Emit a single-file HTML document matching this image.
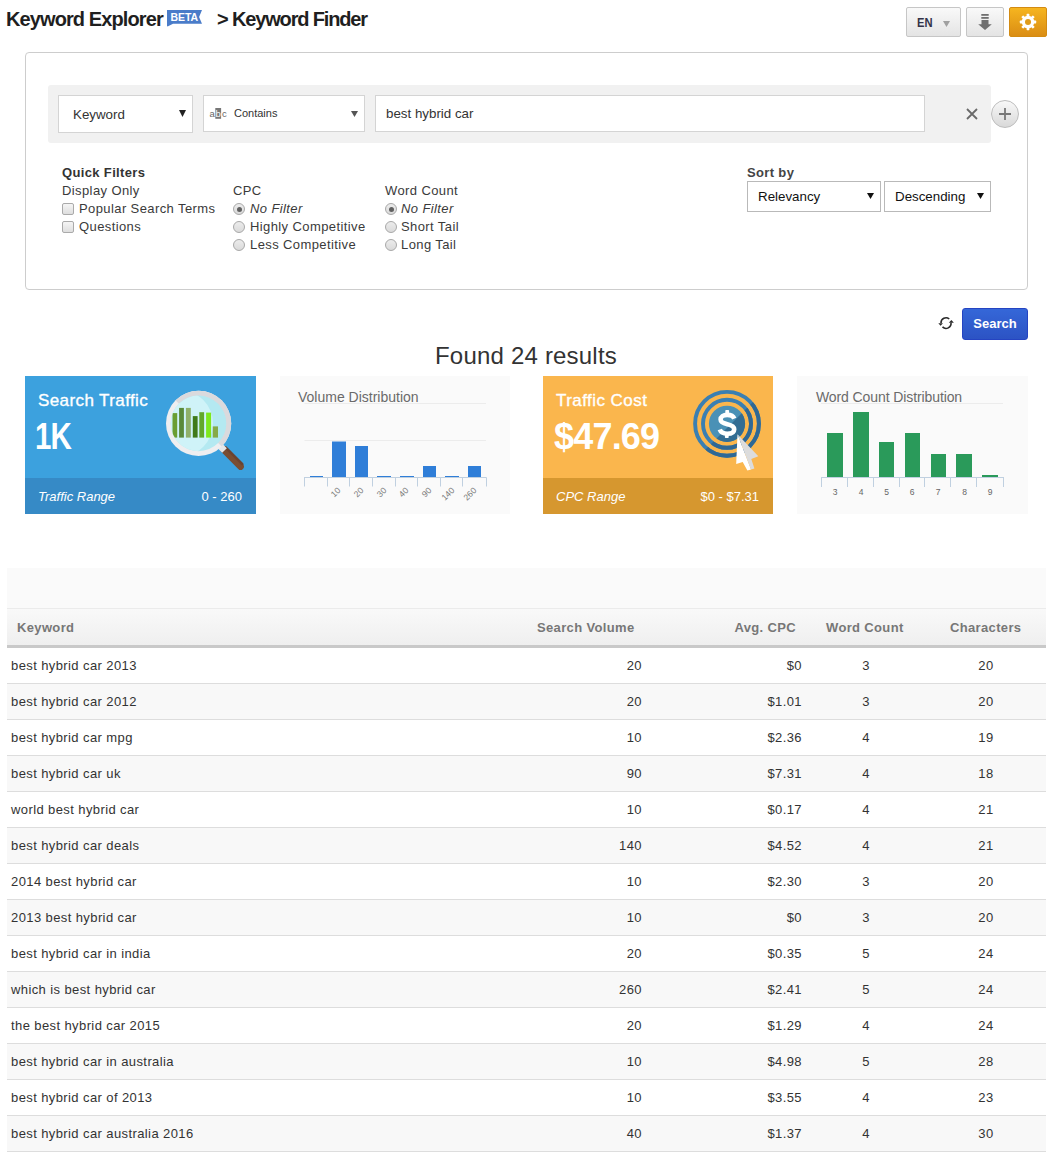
<!DOCTYPE html>
<html><head><meta charset="utf-8">
<style>
*{box-sizing:border-box;margin:0;padding:0}
html,body{width:1048px;height:1153px;overflow:hidden;background:#fff;font-family:"Liberation Sans",sans-serif;color:#333}
body{position:relative}
.a{position:absolute;white-space:nowrap;line-height:1}
svg.a{display:block}
.title{font-weight:bold;font-size:20px;color:#1f1f1f}
.btn{position:absolute;border:1px solid #c6c6c6;border-radius:2px;background:linear-gradient(#f9f9f9,#e4e4e4)}
.sel{position:absolute;background:#fff;border:1px solid #d4d4d4}
.f13{font-size:13px;color:#3a3a3a;letter-spacing:0.4px}
.chk{position:absolute;width:12px;height:12px;border:1px solid #aaa;border-radius:2px;background:linear-gradient(#f5f5f5,#dedede)}
.rad{position:absolute;width:12px;height:12px;border:1px solid #a8a8a8;border-radius:50%;background:linear-gradient(#ececec,#dadada)}
.rad.on::after{content:"";position:absolute;left:2.5px;top:2.5px;width:5px;height:5px;border-radius:50%;background:#606060}
.td{position:absolute;font-size:13px;color:#333;letter-spacing:0.4px}
.th{position:absolute;font-size:13px;font-weight:bold;color:#777;letter-spacing:0.35px}
</style></head><body>
<div class="a title" style="left:6px;top:9px;letter-spacing:-0.9px">Keyword Explorer</div>
<svg class="a" style="left:167px;top:10px" width="36" height="17" viewBox="0 0 36 17"><path d="M0 0H35L32.1 6.9L35 13.7H6L0.6 16.6L0 16Z" fill="#4a7cc9"/><text x="3.5" y="10.9" font-family="Liberation Sans" font-weight="bold" font-size="10.5" fill="#fff" letter-spacing="-0.1">BETA</text></svg>
<div class="a title" style="left:217px;top:9px;letter-spacing:-1.15px">&gt; Keyword Finder</div>
<div class="btn" style="left:906px;top:7px;width:55px;height:30px"></div>
<div class="a" style="left:917px;top:16px;font-size:13px;font-weight:bold;color:#33334a;transform:scaleX(0.86);transform-origin:0 0">EN</div>
<svg class="a" style="left:943px;top:21px" width="7" height="6"><path d="M0 0H7L3.5 6Z" fill="#a0a0a0"/></svg>
<div class="btn" style="left:966px;top:7px;width:38px;height:30px"></div>
<svg class="a" style="left:977px;top:12px" width="16" height="20" viewBox="0 0 16 20"><rect x="4.3" y="2" width="7.4" height="1.8" fill="#707070"/><rect x="4.3" y="5" width="7.4" height="1.8" fill="#707070"/><path d="M4.5 8H11.5V12.2H14.8L8 18L1.2 12.2H4.5Z" fill="#707070"/></svg>
<div class="btn" style="left:1009px;top:7px;width:38px;height:30px;border-color:#d38b12;background:linear-gradient(#f6b51f,#da8d14)"></div>
<svg class="a" style="left:1019px;top:13px" width="18" height="18" viewBox="0 0 18 18"><g fill="#fff"><circle cx="9" cy="9" r="6.3"/><g id="th"><rect x="7.6" y="0.8" width="2.8" height="16.4" rx="0.6"/></g><rect x="7.6" y="0.8" width="2.8" height="16.4" rx="0.6" transform="rotate(45 9 9)"/><rect x="7.6" y="0.8" width="2.8" height="16.4" rx="0.6" transform="rotate(90 9 9)"/><rect x="7.6" y="0.8" width="2.8" height="16.4" rx="0.6" transform="rotate(135 9 9)"/></g><circle cx="9" cy="9" r="3" fill="#e09c1a"/></svg>
<div class="a" style="left:25px;top:52px;width:1003px;height:238px;border:1px solid #cdcdcd;border-radius:4px"></div>
<div class="a" style="left:48px;top:85px;width:943px;height:58px;background:#f1f1f1;border-radius:3px"></div>
<div class="sel" style="left:58px;top:95px;width:135px;height:38px"></div>
<div class="a" style="left:73px;top:108px;font-size:13.33px;color:#333">Keyword</div>
<svg class="a" style="left:179px;top:110px" width="7" height="7"><path d="M0 0H7L3.5 7Z" fill="#222"/></svg>
<div class="sel" style="left:203px;top:95px;width:162px;height:37px"></div>
<svg class="a" style="left:209px;top:107px" width="18" height="12" viewBox="0 0 18 12"><text x="0.5" y="10" font-family="Liberation Sans" font-size="9.5" fill="#666">a</text><rect x="6.3" y="1" width="5.8" height="10.8" fill="#777"/><text x="6.6" y="10" font-family="Liberation Sans" font-size="9.5" fill="#fff">b</text><text x="13" y="10" font-family="Liberation Sans" font-size="9.5" fill="#666">c</text></svg>
<div class="a" style="left:234px;top:108px;font-size:11px;color:#333">Contains</div>
<svg class="a" style="left:351px;top:111px" width="7" height="6"><path d="M0 0H7L3.5 6Z" fill="#555"/></svg>
<div class="sel" style="left:375px;top:95px;width:550px;height:37px"></div>
<div class="a" style="left:386px;top:107px;font-size:13.33px;color:#333">best hybrid car</div>
<svg class="a" style="left:966px;top:108px" width="12" height="12"><path d="M1 1L11 11M11 1L1 11" stroke="#6a6a6a" stroke-width="1.8"/></svg>
<div class="a" style="left:991px;top:100px;width:28px;height:28px;border:1px solid #bdbdbd;border-radius:50%;background:linear-gradient(#f8f8f8,#d9d9d9)"></div>
<svg class="a" style="left:999px;top:108px" width="12" height="12"><path d="M6 0V12M0 6H12" stroke="#777" stroke-width="1.8"/></svg>
<div class="a f13" style="left:62px;top:166px;font-weight:bold;letter-spacing:0.35px;color:#333">Quick Filters</div>
<div class="a f13" style="left:62px;top:184px">Display Only</div>
<div class="chk" style="left:62px;top:203px"></div><div class="a f13" style="left:79px;top:202px">Popular Search Terms</div>
<div class="chk" style="left:62px;top:221px"></div><div class="a f13" style="left:79px;top:220px">Questions</div>
<div class="a f13" style="left:233px;top:184px">CPC</div>
<div class="rad on" style="left:233px;top:203px"></div><div class="a f13" style="left:250px;top:202px;font-style:italic">No Filter</div>
<div class="rad" style="left:233px;top:221px"></div><div class="a f13" style="left:250px;top:220px">Highly Competitive</div>
<div class="rad" style="left:233px;top:239px"></div><div class="a f13" style="left:250px;top:238px">Less Competitive</div>
<div class="a f13" style="left:385px;top:184px">Word Count</div>
<div class="rad on" style="left:385px;top:203px"></div><div class="a f13" style="left:401px;top:202px;font-style:italic">No Filter</div>
<div class="rad" style="left:385px;top:221px"></div><div class="a f13" style="left:401px;top:220px">Short Tail</div>
<div class="rad" style="left:385px;top:239px"></div><div class="a f13" style="left:401px;top:238px">Long Tail</div>
<div class="a f13" style="left:747px;top:166px;font-weight:bold;letter-spacing:0.35px;color:#444">Sort by</div>
<div class="sel" style="left:747px;top:181px;width:134px;height:31px;border-color:#b9b9b9"></div>
<div class="a" style="left:758px;top:190px;font-size:13.33px;color:#111">Relevancy</div>
<svg class="a" style="left:867px;top:193px" width="7" height="6"><path d="M0 0H7L3.5 6Z" fill="#111"/></svg>
<div class="sel" style="left:884px;top:181px;width:107px;height:31px;border-color:#b9b9b9"></div>
<div class="a" style="left:895px;top:190px;font-size:13.33px;color:#111">Descending</div>
<svg class="a" style="left:977px;top:193px" width="7" height="6"><path d="M0 0H7L3.5 6Z" fill="#111"/></svg>
<svg class="a" style="left:935px;top:312px" width="23" height="22" viewBox="0 0 23 22"><g fill="none" stroke="#2a2a2a" stroke-width="1.6"><path d="M14.25 7A5 5 0 0 0 6 11"/><path d="M7.5 14.9A5 5 0 0 0 16 10.7"/></g><g fill="#2a2a2a"><path d="M3.3 11.2H8L5.6 13.8Z"/><path d="M13.8 10.8H18.9L16.4 8.1Z"/></g></svg>
<div class="a" style="left:962px;top:308px;width:66px;height:32px;border:1px solid #2544c2;border-radius:3px;background:linear-gradient(#3567d8,#2c53c4)"></div>
<div class="a" style="left:962px;top:317px;width:66px;text-align:center;font-size:13px;font-weight:bold;color:#fff">Search</div>
<div class="a" style="left:435px;top:344px;font-size:24px;color:#333;letter-spacing:0.2px">Found 24 results</div>
<div class="a" style="left:25px;top:376px;width:231px;height:138px;background:#3ca1de"></div>
<div class="a" style="left:25px;top:478px;width:231px;height:36px;background:#368ac6"></div>
<div class="a" style="left:38px;top:392px;font-size:17px;color:#fff;letter-spacing:0.4px;-webkit-text-stroke:0.35px #fff">Search Traffic</div>
<div class="a" style="left:35px;top:419px;font-size:36px;font-weight:bold;color:#fff;letter-spacing:-1px;transform:scaleX(0.82);transform-origin:0 0">1K</div>
<div class="a" style="left:38px;top:490px;font-size:13px;font-style:italic;color:#fff">Traffic Range</div>
<div class="a" style="left:142px;top:490px;width:100px;text-align:right;font-size:13px;color:#fff">0 - 260</div>
<svg class="a" style="left:160px;top:380px" width="90" height="95" viewBox="0 0 90 95">
<defs><clipPath id="gl"><circle cx="38.5" cy="43.4" r="27.8"/></clipPath></defs>
<path d="M63.5 69.5L80.6 86.6" stroke="#7a4d31" stroke-width="6.6" stroke-linecap="round"/>
<path d="M65.6 67.4L82.3 84.1" stroke="#6b4330" stroke-width="2.6" stroke-linecap="round"/>
<path d="M59 65L64.5 70.5" stroke="#e6e6e8" stroke-width="6.6"/>
<circle cx="38.6" cy="43.4" r="32.6" fill="#eeeef0"/>
<path d="M15.5 20.3A32.6 32.6 0 0 1 61.7 66.5Z" fill="#dadadd"/>
<circle cx="38.5" cy="43.4" r="27.8" fill="#b4e9f1"/>
<g clip-path="url(#gl)">
<circle cx="20" cy="43.4" r="33" fill="#cff3f8"/>
<rect x="12.5" y="33.1" width="4.7" height="24.5" fill="#6a9e32"/>
<rect x="19.1" y="27.9" width="4.8" height="29.7" fill="#5a8a3a"/>
<rect x="25.9" y="27.9" width="4.9" height="29.7" fill="#8fb06a"/>
<rect x="32.8" y="36.1" width="4.8" height="21.5" fill="#3f7a1a"/>
<rect x="39.3" y="32.2" width="4.8" height="25.4" fill="#62a82a"/>
<rect x="46.1" y="32.6" width="5" height="25" fill="#7ee81e"/>
<rect x="52.8" y="46.4" width="5.2" height="11.2" fill="#86aa48"/>
</g>
</svg>
<div class="a" style="left:280px;top:376px;width:230px;height:138px;background:#fafafa"></div>
<div class="a" style="left:298px;top:390px;font-size:14px;color:#6a6a6a">Volume Distribution</div>
<svg class="a" style="left:280px;top:376px" width="230" height="138" viewBox="0 0 230 138">
<g stroke="#ececec" stroke-width="1"><path d="M24.5 27.5H206M24.5 64.5H206"/></g>
<g fill="#2f7ed8">
<rect x="30" y="100" width="13" height="1.5"/>
<rect x="52" y="65.5" width="14" height="36"/>
<rect x="75" y="70" width="13" height="31.5"/>
<rect x="97" y="100" width="14" height="1.5"/>
<rect x="120" y="100" width="14" height="1.5"/>
<rect x="143" y="90" width="13" height="11.5"/>
<rect x="165" y="100" width="14" height="1.5"/>
<rect x="188" y="90" width="13" height="11.5"/>
</g>
<g stroke="#c0d0e0" stroke-width="1"><path d="M24 101.5H206.5"/><path d="M24.5 101.5V110.5M47.5 101.5V110.5M69.5 101.5V110.5M92.5 101.5V110.5M115.5 101.5V110.5M137.5 101.5V110.5M160.5 101.5V110.5M182.5 101.5V110.5M206.5 101.5V110.5"/></g>
<g font-family="Liberation Sans" font-size="8.5" fill="#777" text-anchor="end">
<text transform="translate(61 115) rotate(-45)">10</text>
<text transform="translate(84 115) rotate(-45)">20</text>
<text transform="translate(107 115) rotate(-45)">30</text>
<text transform="translate(129 115) rotate(-45)">40</text>
<text transform="translate(152 115) rotate(-45)">90</text>
<text transform="translate(175 115) rotate(-45)">140</text>
<text transform="translate(197 115) rotate(-45)">260</text>
</g>
</svg>
<div class="a" style="left:543px;top:376px;width:230px;height:138px;background:#fab64d"></div>
<div class="a" style="left:543px;top:478px;width:230px;height:36px;background:#d6972f"></div>
<div class="a" style="left:556px;top:392px;font-size:17px;color:#fff;letter-spacing:0.45px;-webkit-text-stroke:0.35px #fff">Traffic Cost</div>
<div class="a" style="left:554px;top:419px;font-size:36px;font-weight:bold;color:#fff;letter-spacing:-0.8px">$47.69</div>
<div class="a" style="left:556px;top:490px;font-size:13px;font-style:italic;color:#fff">CPC Range</div>
<div class="a" style="left:659px;top:490px;width:100px;text-align:right;font-size:13px;color:#fff">$0 - $7.31</div>
<svg class="a" style="left:685px;top:380px" width="90" height="95" viewBox="0 0 90 95">
<defs><clipPath id="dk"><path d="M-10 100L90 0V100Z"/></clipPath></defs>
<g fill="none" stroke="#3a7fb2"><circle cx="42" cy="43.8" r="31.9" stroke-width="3.9"/><circle cx="42" cy="43.8" r="24" stroke-width="3.9"/></g>
<circle cx="42" cy="43.8" r="18.1" fill="#4a91b6"/>
<g clip-path="url(#dk)">
<g fill="none" stroke="#2f6894"><circle cx="42" cy="43.8" r="31.9" stroke-width="3.9"/><circle cx="42" cy="43.8" r="24" stroke-width="3.9"/></g>
<circle cx="42" cy="43.8" r="18.1" fill="#336d93"/>
</g>
<path d="M49.3 38.6C48.3 36 45.5 34.9 42.2 34.9C38.4 34.9 35.6 36.6 35.6 39.6C35.6 42.6 38.6 43.4 42.3 44.2C46 45 49.2 46 49.2 49.3C49.2 52.3 46.3 53.8 42.3 53.8C38.7 53.8 35.8 52.4 34.8 49.6" fill="none" stroke="#fff" stroke-width="4.6"/><rect x="40.3" y="29.9" width="3.8" height="4.5" rx="0.8" fill="#fff"/><rect x="39.9" y="53.5" width="3.8" height="4.6" rx="0.8" fill="#fff"/>
<path d="M52.5 54.2L51.2 84.1L57.7 82L62.4 90.6L66 89.5Z" fill="#fff"/>
<path d="M52.5 54.2L66 89.5L69.4 88.5L66.3 78.9L73.3 76.3Z" fill="#dcdcdc"/>
</svg>
<div class="a" style="left:797px;top:376px;width:231px;height:138px;background:#fafafa"></div>
<div class="a" style="left:816px;top:390px;font-size:14px;color:#6a6a6a;letter-spacing:-0.1px">Word Count Distribution</div>
<svg class="a" style="left:797px;top:376px" width="231" height="138" viewBox="0 0 231 138">
<g stroke="#ececec"><path d="M24 27.5H206"/></g>
<g fill="#2a9a5a">
<rect x="30" y="57" width="16" height="44.5"/>
<rect x="56" y="36" width="16" height="65.5"/>
<rect x="82" y="66" width="15" height="35.5"/>
<rect x="108" y="57" width="15" height="44.5"/>
<rect x="134" y="78" width="15" height="23.5"/>
<rect x="159" y="78" width="16" height="23.5"/>
<rect x="185" y="99" width="16" height="2.5"/>
</g>
<g stroke="#c0d0e0"><path d="M24 101.5H207"/><path d="M24.5 101.5V111M50.5 101.5V111M76.5 101.5V111M102.5 101.5V111M127.5 101.5V111M153.5 101.5V111M179.5 101.5V111M206.5 101.5V111"/></g>
<g font-family="Liberation Sans" font-size="8.5" fill="#666" text-anchor="middle">
<text x="38" y="118.5">3</text><text x="64" y="118.5">4</text><text x="89.5" y="118.5">5</text><text x="115" y="118.5">6</text><text x="141" y="118.5">7</text><text x="167.5" y="118.5">8</text><text x="193" y="118.5">9</text>
</g>
</svg>
<div class="a" style="left:7px;top:568px;width:1039px;height:41px;background:#fafafa;border-bottom:1px solid #ebebeb"></div>
<div class="a" style="left:7px;top:609px;width:1039px;height:39px;background:linear-gradient(#f9f9f9,#efefef);border-bottom:3px solid #c9c9c9"></div>
<div class="th" style="left:17px;top:620px">Keyword</div>
<div class="th" style="left:537px;top:620px">Search Volume</div>
<div class="th" style="left:596px;width:200px;text-align:right;top:620px">Avg. CPC</div>
<div class="th" style="left:826px;top:620px">Word Count</div>
<div class="th" style="left:950px;top:620px">Characters</div>
<div class="a" style="left:7px;top:648px;width:1039px;height:36px;background:#fff;border-bottom:1px solid #dddddd"></div>
<div class="td" style="left:11px;top:658px">best hybrid car 2013</div>
<div class="td" style="left:542px;width:100px;text-align:right;top:658px">20</div>
<div class="td" style="left:702px;width:100px;text-align:right;top:658px">$0</div>
<div class="td" style="left:816px;width:100px;text-align:center;top:658px">3</div>
<div class="td" style="left:936px;width:100px;text-align:center;top:658px">20</div>
<div class="a" style="left:7px;top:684px;width:1039px;height:36px;background:#f8f8f8;border-bottom:1px solid #dddddd"></div>
<div class="td" style="left:11px;top:694px">best hybrid car 2012</div>
<div class="td" style="left:542px;width:100px;text-align:right;top:694px">20</div>
<div class="td" style="left:702px;width:100px;text-align:right;top:694px">$1.01</div>
<div class="td" style="left:816px;width:100px;text-align:center;top:694px">3</div>
<div class="td" style="left:936px;width:100px;text-align:center;top:694px">20</div>
<div class="a" style="left:7px;top:720px;width:1039px;height:36px;background:#fff;border-bottom:1px solid #dddddd"></div>
<div class="td" style="left:11px;top:730px">best hybrid car mpg</div>
<div class="td" style="left:542px;width:100px;text-align:right;top:730px">10</div>
<div class="td" style="left:702px;width:100px;text-align:right;top:730px">$2.36</div>
<div class="td" style="left:816px;width:100px;text-align:center;top:730px">4</div>
<div class="td" style="left:936px;width:100px;text-align:center;top:730px">19</div>
<div class="a" style="left:7px;top:756px;width:1039px;height:36px;background:#f8f8f8;border-bottom:1px solid #dddddd"></div>
<div class="td" style="left:11px;top:766px">best hybrid car uk</div>
<div class="td" style="left:542px;width:100px;text-align:right;top:766px">90</div>
<div class="td" style="left:702px;width:100px;text-align:right;top:766px">$7.31</div>
<div class="td" style="left:816px;width:100px;text-align:center;top:766px">4</div>
<div class="td" style="left:936px;width:100px;text-align:center;top:766px">18</div>
<div class="a" style="left:7px;top:792px;width:1039px;height:36px;background:#fff;border-bottom:1px solid #dddddd"></div>
<div class="td" style="left:11px;top:802px">world best hybrid car</div>
<div class="td" style="left:542px;width:100px;text-align:right;top:802px">10</div>
<div class="td" style="left:702px;width:100px;text-align:right;top:802px">$0.17</div>
<div class="td" style="left:816px;width:100px;text-align:center;top:802px">4</div>
<div class="td" style="left:936px;width:100px;text-align:center;top:802px">21</div>
<div class="a" style="left:7px;top:828px;width:1039px;height:36px;background:#f8f8f8;border-bottom:1px solid #dddddd"></div>
<div class="td" style="left:11px;top:838px">best hybrid car deals</div>
<div class="td" style="left:542px;width:100px;text-align:right;top:838px">140</div>
<div class="td" style="left:702px;width:100px;text-align:right;top:838px">$4.52</div>
<div class="td" style="left:816px;width:100px;text-align:center;top:838px">4</div>
<div class="td" style="left:936px;width:100px;text-align:center;top:838px">21</div>
<div class="a" style="left:7px;top:864px;width:1039px;height:36px;background:#fff;border-bottom:1px solid #dddddd"></div>
<div class="td" style="left:11px;top:874px">2014 best hybrid car</div>
<div class="td" style="left:542px;width:100px;text-align:right;top:874px">10</div>
<div class="td" style="left:702px;width:100px;text-align:right;top:874px">$2.30</div>
<div class="td" style="left:816px;width:100px;text-align:center;top:874px">3</div>
<div class="td" style="left:936px;width:100px;text-align:center;top:874px">20</div>
<div class="a" style="left:7px;top:900px;width:1039px;height:36px;background:#f8f8f8;border-bottom:1px solid #dddddd"></div>
<div class="td" style="left:11px;top:910px">2013 best hybrid car</div>
<div class="td" style="left:542px;width:100px;text-align:right;top:910px">10</div>
<div class="td" style="left:702px;width:100px;text-align:right;top:910px">$0</div>
<div class="td" style="left:816px;width:100px;text-align:center;top:910px">3</div>
<div class="td" style="left:936px;width:100px;text-align:center;top:910px">20</div>
<div class="a" style="left:7px;top:936px;width:1039px;height:36px;background:#fff;border-bottom:1px solid #dddddd"></div>
<div class="td" style="left:11px;top:946px">best hybrid car in india</div>
<div class="td" style="left:542px;width:100px;text-align:right;top:946px">20</div>
<div class="td" style="left:702px;width:100px;text-align:right;top:946px">$0.35</div>
<div class="td" style="left:816px;width:100px;text-align:center;top:946px">5</div>
<div class="td" style="left:936px;width:100px;text-align:center;top:946px">24</div>
<div class="a" style="left:7px;top:972px;width:1039px;height:36px;background:#f8f8f8;border-bottom:1px solid #dddddd"></div>
<div class="td" style="left:11px;top:982px">which is best hybrid car</div>
<div class="td" style="left:542px;width:100px;text-align:right;top:982px">260</div>
<div class="td" style="left:702px;width:100px;text-align:right;top:982px">$2.41</div>
<div class="td" style="left:816px;width:100px;text-align:center;top:982px">5</div>
<div class="td" style="left:936px;width:100px;text-align:center;top:982px">24</div>
<div class="a" style="left:7px;top:1008px;width:1039px;height:36px;background:#fff;border-bottom:1px solid #dddddd"></div>
<div class="td" style="left:11px;top:1018px">the best hybrid car 2015</div>
<div class="td" style="left:542px;width:100px;text-align:right;top:1018px">20</div>
<div class="td" style="left:702px;width:100px;text-align:right;top:1018px">$1.29</div>
<div class="td" style="left:816px;width:100px;text-align:center;top:1018px">4</div>
<div class="td" style="left:936px;width:100px;text-align:center;top:1018px">24</div>
<div class="a" style="left:7px;top:1044px;width:1039px;height:36px;background:#f8f8f8;border-bottom:1px solid #dddddd"></div>
<div class="td" style="left:11px;top:1054px">best hybrid car in australia</div>
<div class="td" style="left:542px;width:100px;text-align:right;top:1054px">10</div>
<div class="td" style="left:702px;width:100px;text-align:right;top:1054px">$4.98</div>
<div class="td" style="left:816px;width:100px;text-align:center;top:1054px">5</div>
<div class="td" style="left:936px;width:100px;text-align:center;top:1054px">28</div>
<div class="a" style="left:7px;top:1080px;width:1039px;height:36px;background:#fff;border-bottom:1px solid #dddddd"></div>
<div class="td" style="left:11px;top:1090px">best hybrid car of 2013</div>
<div class="td" style="left:542px;width:100px;text-align:right;top:1090px">10</div>
<div class="td" style="left:702px;width:100px;text-align:right;top:1090px">$3.55</div>
<div class="td" style="left:816px;width:100px;text-align:center;top:1090px">4</div>
<div class="td" style="left:936px;width:100px;text-align:center;top:1090px">23</div>
<div class="a" style="left:7px;top:1116px;width:1039px;height:36px;background:#f8f8f8;border-bottom:1px solid #dddddd"></div>
<div class="td" style="left:11px;top:1126px">best hybrid car australia 2016</div>
<div class="td" style="left:542px;width:100px;text-align:right;top:1126px">40</div>
<div class="td" style="left:702px;width:100px;text-align:right;top:1126px">$1.37</div>
<div class="td" style="left:816px;width:100px;text-align:center;top:1126px">4</div>
<div class="td" style="left:936px;width:100px;text-align:center;top:1126px">30</div>
</body></html>
